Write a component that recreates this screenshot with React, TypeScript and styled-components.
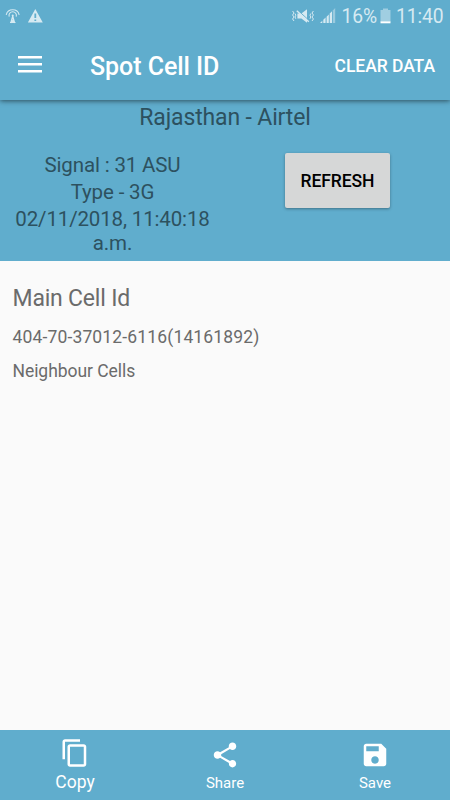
import React from 'react';
import styled, { createGlobalStyle } from 'styled-components';

const blue = '#60adcd';

const GlobalStyle = createGlobalStyle`
  * { box-sizing: border-box; }
  body { margin: 0; background: #fafafa; font-family: Roboto, sans-serif; }
  button { font-family: inherit; border: 0; padding: 0; background: none; color: inherit; }
  svg { display: block; flex: none; }
`;

const Screen = styled.div`
  width: 450px;
  height: 800px;
  display: flex;
  flex-direction: column;
  overflow: hidden;
  background: #fafafa;
`;

const Top = styled.header`
  position: relative;
  flex: none;
  background: ${blue};
  color: #fff;
  box-shadow: 0 1px 5px rgba(0, 0, 0, 0.55);
`;

const StatusBar = styled.div`
  height: 32px;
  padding: 0 6.5px 0 5px;
  display: flex;
  align-items: center;
  justify-content: space-between;
  color: #d6eaf2;
`;

const StatusGroup = styled.div<{ $gap: number }>`
  display: flex;
  align-items: center;
  gap: ${(p) => p.$gap}px;
`;

const StatusText = styled.span`
  padding-top: 2px;
  font-size: 19.3px;
  line-height: 30px;
  letter-spacing: -0.1px;
`;

const Toolbar = styled.div`
  height: 68px;
  padding: 0 15px 0 18px;
  display: flex;
  align-items: center;
`;

const MenuButton = styled.button`
  margin-top: -4px;
  width: 24px;
`;

const Title = styled.h1`
  margin: 2px 0 0 48px;
  flex: 1;
  font-size: 25px;
  font-weight: 500;
  line-height: 66px;
  letter-spacing: -0.05px;
`;

const ClearButton = styled.button`
  font-size: 17.5px;
  font-weight: 500;
  line-height: 68px;
  letter-spacing: -0.05px;
`;

const Summary = styled.section`
  height: 161px;
  flex: none;
  background: ${blue};
  color: #2d515f;
`;

const Operator = styled.div`
  padding-top: 3px;
  height: 53px;
  text-align: center;
  font-size: 23px;
  line-height: 29px;
  letter-spacing: -0.15px;
`;

const SummaryColumns = styled.div`
  display: grid;
  grid-template-columns: 225px 225px;
  align-items: start;
  justify-items: center;
`;

const Readings = styled.div`
  width: 205px;
  text-align: center;
  font-size: 20.5px;
  line-height: 24px;
  letter-spacing: -0.15px;
`;

const Reading = styled.div`
  margin-bottom: 3px;
`;

const RefreshButton = styled.button`
  width: 105px;
  height: 55px;
  border-radius: 2px;
  background: #d6d7d7;
  color: #000;
  font-size: 17.5px;
  font-weight: 500;
  letter-spacing: -0.1px;
  box-shadow: 0 1px 3px rgba(0, 0, 0, 0.35);
`;

const Content = styled.main`
  flex: 1;
  padding: 23px 12.5px;
  color: #6b6b6b;
`;

const Heading = styled.h2`
  margin: 0;
  font-size: 23px;
  font-weight: 400;
  line-height: 30px;
  letter-spacing: -0.2px;
`;

const Line = styled.p<{ $spacing: number }>`
  margin: 0;
  font-size: 17.5px;
  line-height: 34px;
  letter-spacing: ${(p) => p.$spacing}px;
`;

const CellList = styled.div`
  padding-top: 6px;
`;

const BottomBar = styled.nav`
  height: 70px;
  flex: none;
  display: grid;
  grid-template-columns: repeat(3, 1fr);
  background: ${blue};
  color: #fff;
`;

const Tab = styled.button<{ $active?: boolean }>`
  display: flex;
  flex-direction: column;
  align-items: center;
  gap: ${(p) => (p.$active ? 3 : 2)}px;
  padding-top: ${(p) => (p.$active ? 8 : 10)}px;
  font-size: ${(p) => (p.$active ? 17.5 : 15)}px;
  line-height: 22px;
`;

const AntennaIcon = () => (
  <svg width="16" height="16" viewBox="0 0 16 16" fill="none" stroke="currentColor" strokeWidth="1.1">
    <path d="M1.2 6.8a6.7 6.7 0 0 1 13 0M4.2 8.6a3.7 3.7 0 1 1 7 0M7.7 8l-2 7M7.7 8l2 7M6.5 12h2.5M5.6 14.5l3.5-2.5M5 14.5h5.5" />
    <circle cx="7.7" cy="7.4" r="1" fill="currentColor" stroke="none" />
  </svg>
);

const WarningIcon = () => (
  <svg width="16" height="16" viewBox="0 0 16 16">
    <path fill="currentColor" fillRule="evenodd" d="M7.3.9 14.8 14.6H-.2zM6.4 5.4v4.7h1.8V5.4zM6.4 11.4v1.7h1.8v-1.7z" />
  </svg>
);

const MutedIcon = () => (
  <svg width="24" height="18" viewBox="0 0 24 18" fill="none" stroke="currentColor" strokeWidth="1">
    <path d="M1.6 4L3 6 1.6 8 3 10l-1.4 2L3 14M4 6.5l.8 1.7L4 10l.8 1.8M19.8 6.5l-.8 1.7.8 1.8-.8 1.8M22.4 4L21 6l1.4 2L21 10l1.4 2-1.4 2" />
    <path fill="currentColor" stroke="none" d="M6.4 6.4h4L16 2.2v13.6l-5.6-4.2h-4z" />
    <path stroke={blue} strokeWidth="1" d="M6.8 3.2l11.4 10.4" />
    <path strokeWidth="1.4" d="M5.8 3.8l12 11" />
  </svg>
);

const SignalIcon = () => (
  <svg width="16" height="16" viewBox="0 0 16 16" fill="currentColor">
    <path d="M0 15l2.3-2.2V15zM3.3 11.8l2.3-2.2V15H3.3zM6.6 8.7l2.2-2.2V15H6.6zM9.7 5.5L12 3.2V15H9.7z" />
    <path opacity=".5" d="M12.8 2.4L15.2 0v15h-2.4z" />
  </svg>
);

const BatteryIcon = () => (
  <svg width="11" height="16" viewBox="0 0 11 16" fill="currentColor">
    <path opacity=".55" d="M3 .5h5V2h2.5v11.5H.5V2H3z" />
    <path fill="#fff" d="M.5 13.3h10v2H.5z" />
  </svg>
);

const MenuIcon = () => (
  <svg width="24" height="18" viewBox="0 0 24 18" fill="currentColor">
    <path d="M0 1h24v2.6H0zM0 8h24v2.6H0zM0 15h24v2.6H0z" />
  </svg>
);

const CopyIcon = () => (
  <svg width="30" height="30" viewBox="0 0 24 24" fill="currentColor">
    <path d="M16 1H4C2.9 1 2 1.9 2 3v14h2V3h12zM19 5H8C6.9 5 6 5.9 6 7v14c0 1.1.9 2 2 2h11c1.1 0 2-.9 2-2V7c0-1.1-.9-2-2-2zm0 16H8V7h11z" />
  </svg>
);

const ShareIcon = () => (
  <svg width="30" height="30" viewBox="0 0 24 24" fill="currentColor">
    <path d="M18 16.08c-.76 0-1.44.3-1.96.77L8.91 12.7c.05-.23.09-.46.09-.7s-.04-.47-.09-.7l7.05-4.11c.54.5 1.25.81 2.04.81 1.66 0 3-1.34 3-3s-1.34-3-3-3-3 1.34-3 3c0 .24.04.47.09.7L8.04 9.81C7.5 9.31 6.79 9 6 9c-1.66 0-3 1.34-3 3s1.34 3 3 3c.79 0 1.5-.31 2.04-.81l7.12 4.16c-.05.21-.08.43-.08.65 0 1.61 1.31 2.92 2.92 2.92s2.92-1.31 2.92-2.92-1.31-2.92-2.92-2.92z" />
  </svg>
);

const SaveIcon = () => (
  <svg width="30" height="30" viewBox="0 0 24 24" fill="currentColor">
    <path d="M17 3H5c-1.11 0-2 .9-2 2v14c0 1.1.89 2 2 2h14c1.1 0 2-.9 2-2V7zm-5 16c-1.66 0-3-1.34-3-3s1.34-3 3-3 3 1.34 3 3-1.34 3-3 3zm3-10H5V5h10z" />
  </svg>
);

export default function App() {
  return (
    <>
      <GlobalStyle />
      <Screen>
        <Top>
          <StatusBar>
            <StatusGroup $gap={7}>
              <AntennaIcon />
              <WarningIcon />
            </StatusGroup>
            <StatusGroup $gap={5}>
              <MutedIcon />
              <SignalIcon />
              <StatusGroup $gap={3}>
                <StatusText>16%</StatusText>
                <BatteryIcon />
              </StatusGroup>
              <StatusText>11:40</StatusText>
            </StatusGroup>
          </StatusBar>
          <Toolbar>
            <MenuButton aria-label="Menu">
              <MenuIcon />
            </MenuButton>
            <Title>Spot Cell ID</Title>
            <ClearButton>CLEAR DATA</ClearButton>
          </Toolbar>
        </Top>
        <Summary>
          <Operator>Rajasthan - Airtel</Operator>
          <SummaryColumns>
            <Readings>
              <Reading>Signal : 31 ASU</Reading>
              <Reading>Type - 3G</Reading>
              <Reading>02/11/2018, 11:40:18 a.m.</Reading>
            </Readings>
            <RefreshButton>REFRESH</RefreshButton>
          </SummaryColumns>
        </Summary>
        <Content>
          <Heading>Main Cell Id</Heading>
          <CellList>
            <Line $spacing={0.15}>404-70-37012-6116(14161892)</Line>
            <Line $spacing={-0.05}>Neighbour Cells</Line>
          </CellList>
        </Content>
        <BottomBar>
          <Tab $active>
            <CopyIcon />
            <span>Copy</span>
          </Tab>
          <Tab>
            <ShareIcon />
            <span>Share</span>
          </Tab>
          <Tab>
            <SaveIcon />
            <span>Save</span>
          </Tab>
        </BottomBar>
      </Screen>
    </>
  );
}
